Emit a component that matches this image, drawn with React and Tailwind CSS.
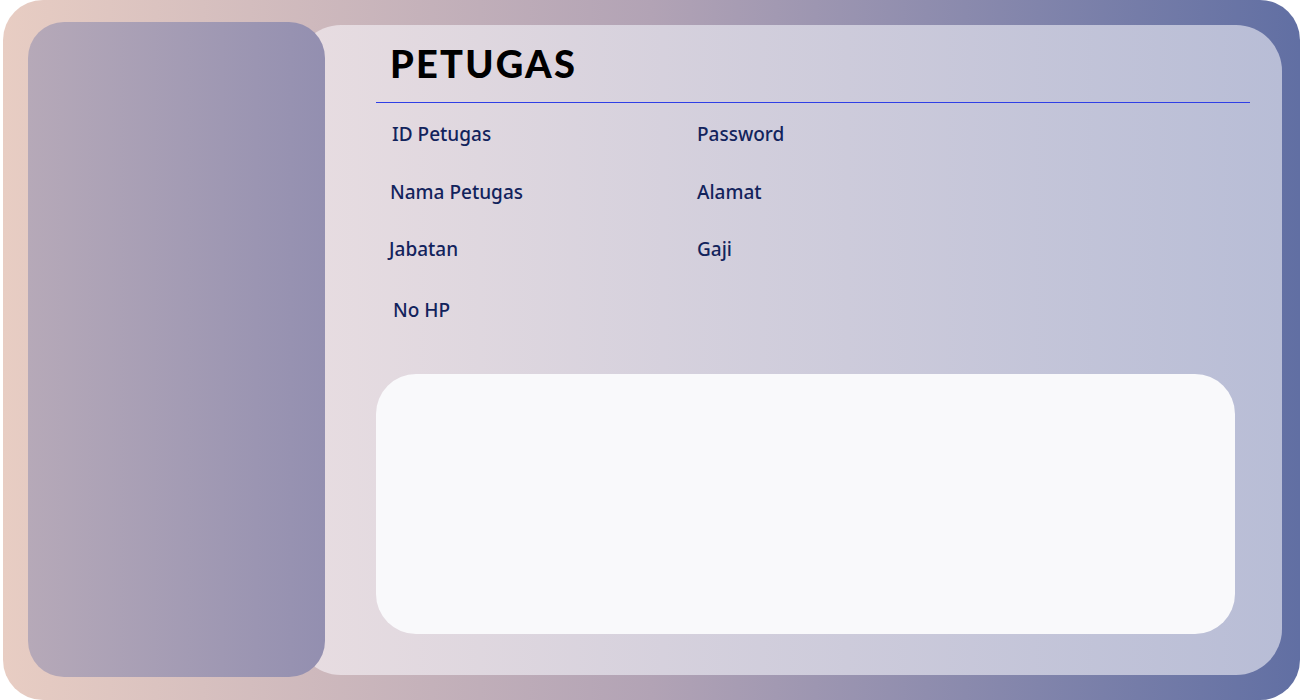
export default function App() {
  const rows = [
    { left: "ID Petugas", offset: "pl-[16px]", right: "Password", h: "h-[58px]" },
    { left: "Nama Petugas", offset: "pl-[14px]", right: "Alamat", h: "h-[57px]" },
    { left: "Jabatan", offset: "pl-[13px]", right: "Gaji", h: "h-[61px]" },
    { left: "No HP", offset: "pl-[17px]", right: "", h: "h-[20px]" },
  ];

  return (
    <div className="w-[1300px] h-[700px] bg-white">
      <div className="ml-[3px] w-[1297px] h-[700px] rounded-[40px] bg-gradient-to-r from-[#e8cdc3] via-[#b2a3b5] to-[#616fa3] flex pl-[25px] pt-[22px]">
        {/* side panel */}
        <div className="relative z-10 w-[297px] h-[655px] shrink-0 rounded-[36px] bg-gradient-to-r from-[#b6a9b8] to-[#938fb0]" />

        {/* main panel */}
        <div className="-ml-[30px] mt-[3px] w-[987px] h-[650px] rounded-[46px] bg-gradient-to-r from-[#e8dde1] to-[#b8bdd6] pl-[81px] pt-[16px]">
          <h1
            className="ml-[14px] text-[38px] leading-[44px] font-black tracking-[2.2px] text-black"
            style={{ fontFamily: "Lato, sans-serif" }}
          >
            PETUGAS
          </h1>
          <div className="mt-[17px] w-[874px] h-px bg-[#2f3fe6]" />

          <div
            className="mt-[21px] text-[19px] leading-[20px] font-medium text-[#12235c]"
            style={{ fontFamily: "'Noto Sans', sans-serif" }}
          >
            {rows.map((row) => (
              <div key={row.left} className={`flex ${row.h}`}>
                <div className={`w-[321px] ${row.offset}`}>{row.left}</div>
                <div>{row.right}</div>
              </div>
            ))}
          </div>

          <div className="mt-[54px] w-[859px] h-[260px] rounded-[40px] bg-[#f9f9fb]" />
        </div>
      </div>
    </div>
  );
}
